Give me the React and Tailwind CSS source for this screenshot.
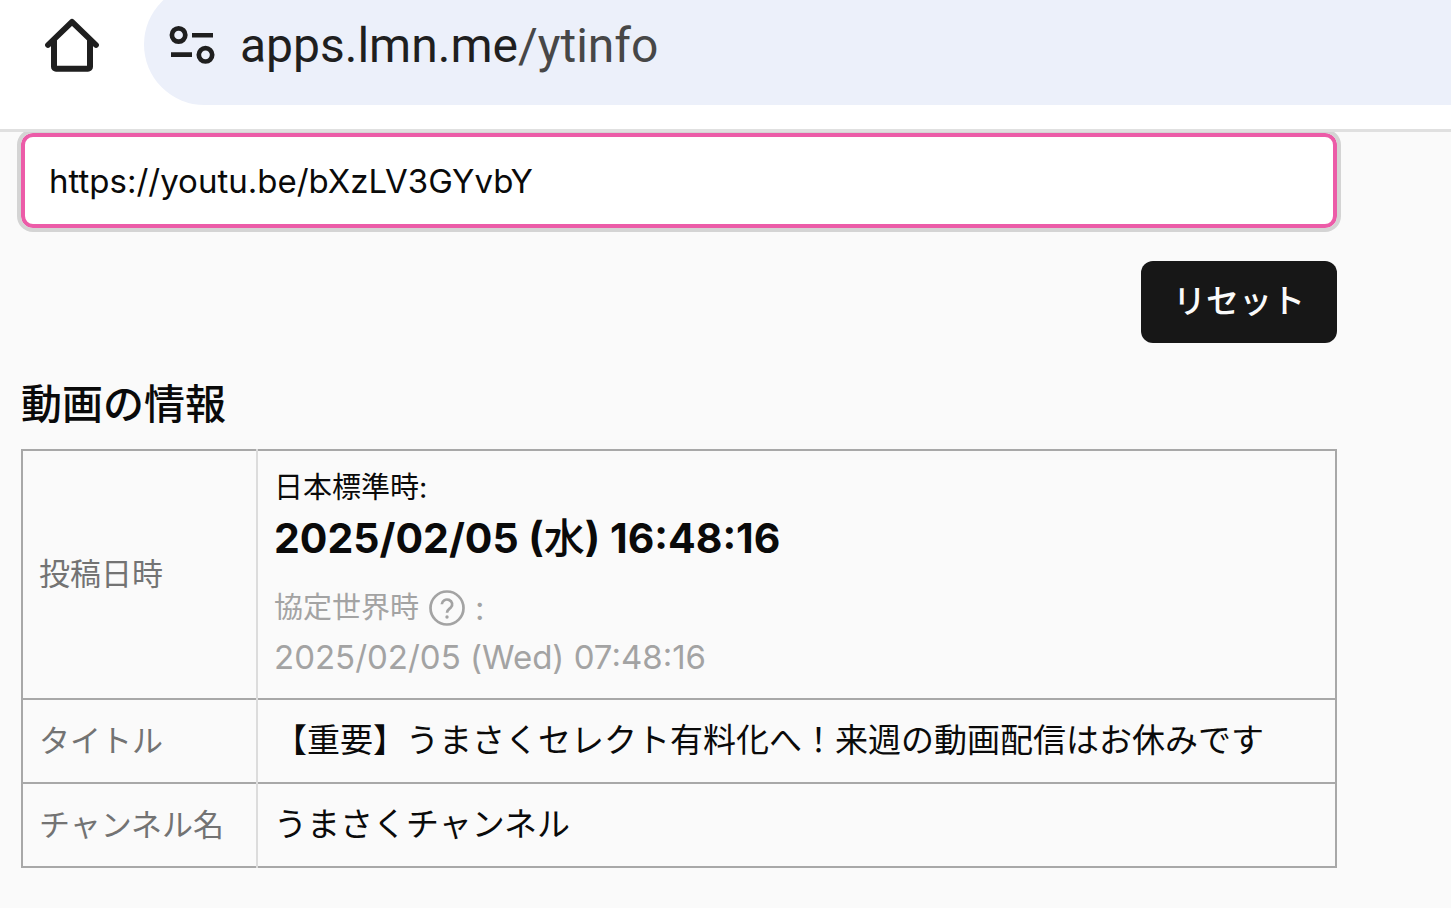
/**
 * YouTube video info page, shown below the mobile browser's address bar
 */

const rows = [
  { label: 'タイトル', value: '【重要】うまさくセレクト有料化へ！来週の動画配信はお休みです' },
  { label: 'チャンネル名', value: 'うまさくチャンネル' },
]

function HomeIcon() {
  return (
    <svg className="h-[56px] w-[56px]" viewBox="0 0 56 56" fill="none" stroke="currentColor" strokeWidth="6" strokeLinecap="round">
      <path d="M4 28L28 4.8l24 23.2" strokeWidth="5.8" strokeLinejoin="round" />
      <path d="M10 24v25.7a2 2 0 0 0 2 2h32a2 2 0 0 0 2-2V24" />
    </svg>
  )
}

function SiteInfoIcon() {
  return (
    <svg className="h-[40px] w-[46px]" viewBox="0 0 46 40" fill="none" stroke="currentColor" strokeWidth="4.7">
      <circle cx="9.6" cy="10" r="6.7" />
      <path d="M23 10.2h21M2 29.6h21" strokeWidth="4.6" />
      <circle cx="36.5" cy="29.8" r="6.7" />
    </svg>
  )
}

function HelpIcon() {
  return (
    <svg className="h-9 w-9" viewBox="0 0 36 36" fill="none" stroke="currentColor" strokeWidth="2.7">
      <circle cx="18" cy="18" r="16.5" />
      <path d="M12.8 14.2a5.2 4.8 0 1 1 9 3.4c-1.8 1.7-3.8 2.5-3.8 5.2" />
      <circle cx="18" cy="27" r="1.7" fill="currentColor" stroke="none" />
    </svg>
  )
}

function BrowserBar() {
  return (
    <header className="relative z-10 flex h-[132px] items-start overflow-hidden border-b-3 border-[#e0e0e0] bg-white text-[#1f1f1f]">
      <a href="#home" aria-label="Home" className="mx-[44px] mt-[17px] shrink-0">
        <HomeIcon />
      </a>
      <div className="-mt-4 flex h-[121px] flex-1 items-center gap-[25px] rounded-l-full bg-[#ecf0fa] pl-[25px]">
        <SiteInfoIcon />
        <p className="pt-0.5 font-[Roboto,sans-serif] text-[48px]">
          apps.lmn.me<span className="text-[#474747]">/ytinfo</span>
        </p>
      </div>
    </header>
  )
}

function LabelCell({ children }) {
  return (
    <th scope="row" className="w-[235px] border-r-2 border-[#dcdcdc] px-4 text-left text-[31px] font-normal whitespace-nowrap text-[#737373]">
      {children}
    </th>
  )
}

export default function App() {
  return (
    <div className="min-h-screen bg-[#fafafa] font-[Inter,'Noto_Sans_CJK_JP',sans-serif] text-[#0a0a0a]" lang="ja">
      <BrowserBar />
      <main className="mr-[114px] ml-[21px] pt-px">
        <input
          type="url"
          aria-label="URL"
          defaultValue="https://youtu.be/bXzLV3GYvbY"
          className="block h-[95px] w-full rounded-xl border-4 border-[#ec5ca8] bg-white px-6 text-[33px] outline-4 outline-[#d4d4d4]"
        />
        <div className="mt-[33px] flex justify-end">
          <button type="button" className="h-[82px] rounded-xl bg-[#171717] px-8 text-[33px] font-medium text-[#fafafa]">
            リセット
          </button>
        </div>
        <h2 className="mt-8 mb-4 text-[41px] leading-[58px] font-medium">動画の情報</h2>

        <table className="w-full border-collapse border-2 border-[#a8a8a8] text-[33px]">
          <tbody>
            <tr className="h-[249px] border-b-2 border-[#a8a8a8]">
              <LabelCell>投稿日時</LabelCell>
              <td className="px-4 pt-[17px] pb-4 align-top">
                <p className="text-[29px] leading-[40px]">日本標準時:</p>
                <p className="text-[41px] leading-[60px] font-bold">
                  2025/02/05 (<span className="font-medium">水</span>) 16:48:16
                </p>
                <div className="mt-4 text-[#a3a3a3]">
                  <p className="flex items-center text-[29px] leading-[48px]">
                    協定世界時
                    <button type="button" aria-label="協定世界時" className="mx-2.5">
                      <HelpIcon />
                    </button>
                    <span className="font-[Inter,sans-serif] text-[33px]">:</span>
                  </p>
                  <p className="leading-[50px]">2025/02/05 (Wed) 07:48:16</p>
                </div>
              </td>
            </tr>
            {rows.map((row) => (
              <tr key={row.label} className="h-[84px] border-b-2 border-[#a8a8a8]">
                <LabelCell>{row.label}</LabelCell>
                <td className="px-4">{row.value}</td>
              </tr>
            ))}
          </tbody>
        </table>
      </main>
    </div>
  )
}
